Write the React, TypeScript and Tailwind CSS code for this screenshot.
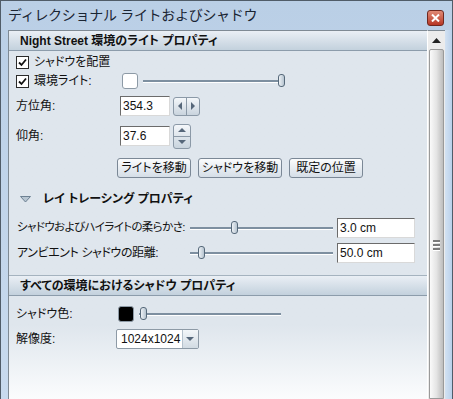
import React from 'react';

const font = "font-['Liberation_Sans','Noto_Sans_CJK_JP',sans-serif] [font-feature-settings:'palt']";

function Check({ checked }: { checked: boolean }) {
  return (
    <span className="w-[13px] h-[13px] bg-white border border-[#2b2b2b] flex items-center justify-center shrink-0">
      {checked && (
        <svg width="9" height="9" viewBox="0 0 9 9">
          <path d="M1 4.5 L3.5 7 L8 1.5" fill="none" stroke="#111" strokeWidth="1.8" />
        </svg>
      )}
    </span>
  );
}

function Slider({ width, thumb }: { width: number; thumb: number }) {
  return (
    <div className="relative h-[14px] shrink-0" style={{ width }}>
      <div className="absolute left-0 right-0 top-[6px] h-[2px] bg-[#7d8fa0] border-b border-white box-content" />
      <div
        className="absolute top-0 w-[7px] h-[13px] rounded-[3px] border border-[#56697a] bg-gradient-to-r from-[#eef2f6] to-[#b6c4d0]"
        style={{ left: thumb }}
      />
    </div>
  );
}

function Field({ value, w }: { value: string; w: string }) {
  return (
    <div
      className={`${w} h-[20px] bg-white border border-t-[#6b6b6b] border-l-[#6b6b6b] border-r-[#d9d9d9] border-b-[#d9d9d9] flex items-center pl-[2px] text-[12px] text-[#111] shrink-0`}
    >
      {value}
    </div>
  );
}

function Tri({ dir }: { dir: 'l' | 'r' | 'u' | 'd' }) {
  const p = {
    l: 'M5 0 L5 8 L1 4 Z',
    r: 'M1 0 L1 8 L5 4 Z',
    u: 'M0 5 L8 5 L4 1 Z',
    d: 'M0 1 L8 1 L4 5 Z',
  }[dir];
  const horiz = dir === 'l' || dir === 'r';
  return (
    <svg width={horiz ? 6 : 9} height={horiz ? 9 : 6} viewBox={horiz ? '0 0 6 9' : '0 0 9 6'}>
      <path d={p} fill="#56677a" />
    </svg>
  );
}

function Button({ label, w }: { label: string; w: string }) {
  return (
    <div
      className={`${w} h-[20px] rounded-[3px] border border-[#7b8896] bg-gradient-to-b from-[#fbfcfd] to-[#d5dee7] flex items-center justify-center text-[12px] text-[#111]`}
    >
      {label}
    </div>
  );
}

function Header({ title }: { title: string }) {
  return (
    <div className="h-[20px] border-b border-[#8c9cab] bg-gradient-to-b from-[#eaeff5] to-[#c3d1dd] flex items-center pl-[11px] text-[12px] font-bold text-[#111]">
      {title}
    </div>
  );
}

export default function App() {
  return (
    <div
      className={`w-[453px] h-[399px] overflow-hidden flex flex-col border-l border-t border-r border-[#505c68] bg-gradient-to-b from-[#bacfe6] to-[#c8daee] text-[#111] ${font}`}
    >
      {/* Title bar */}
      <div className="h-[29px] flex items-center pl-[7px] pr-[8px] shrink-0">
        <span className="flex-1 text-[14px] text-[#1a2533] [font-feature-settings:normal] tracking-[-0.3px]">
          ディレクショナル ライトおよびシャドウ
        </span>
        <div className="w-[17px] h-[16px] mt-[5px] rounded-[3px] border border-[#70281f] bg-gradient-to-b from-[#e08a76] to-[#b73525] flex items-center justify-center">
          <svg width="9" height="8" viewBox="0 0 9 8">
            <path d="M1 0.5 L8 7.5 M8 0.5 L1 7.5" stroke="#fff" strokeWidth="2" />
          </svg>
        </div>
      </div>

      <div className="flex flex-1 min-h-0 pl-[7px]">
        {/* Panel */}
        <div className="flex-1 flex flex-col border-t border-l border-[#7f8a94] bg-gradient-to-b from-[#dfe6ed] via-[#dfe6ed] via-[80%] to-[#fbfcfd]">
          <Header title="Night Street 環境のライト プロパティ" />

          <div className="flex flex-col pl-[7px] text-[12px] whitespace-nowrap">
            <div className="h-[18px] mt-[2px] flex items-center gap-[5px]">
              <Check checked />
              <span>シャドウを配置</span>
            </div>
            <div className="h-[18px] mt-[1px] flex items-center">
              <Check checked />
              <span className="ml-[5px] w-[88px]">環境ライト:</span>
              <div className="w-[16px] h-[16px] rounded-[3px] bg-white border border-[#8d9aa6]" />
              <div className="ml-[5px]">
                <Slider width={140} thumb={135} />
              </div>
            </div>

            <div className="h-[20px] mt-[6px] flex items-center">
              <span className="w-[104px]">方位角:</span>
              <Field value="354.3" w="w-[50px]" />
              <div className="ml-[3px] w-[27px] h-[19px] rounded-[3px] border border-[#8b99a7] bg-gradient-to-b from-[#f4f7fa] to-[#c9d4de] flex">
                <div className="flex-1 flex items-center justify-center border-r border-[#8b99a7]">
                  <Tri dir="l" />
                </div>
                <div className="flex-1 flex items-center justify-center">
                  <Tri dir="r" />
                </div>
              </div>
            </div>

            <div className="h-[24px] mt-[8px] flex items-center">
              <span className="w-[104px]">仰角:</span>
              <Field value="37.6" w="w-[50px]" />
              <div className="ml-[3px] w-[18px] h-[25px] rounded-[3px] border border-[#8b99a7] bg-gradient-to-b from-[#f4f7fa] to-[#c9d4de] flex flex-col">
                <div className="flex-1 flex items-center justify-center border-b border-[#8b99a7]">
                  <Tri dir="u" />
                </div>
                <div className="flex-1 flex items-center justify-center">
                  <Tri dir="d" />
                </div>
              </div>
            </div>

            <div className="h-[20px] mt-[10px] flex items-center pl-[101px] gap-[7px]">
              <Button label="ライトを移動" w="w-[74px]" />
              <Button label="シャドウを移動" w="w-[84px]" />
              <Button label="既定の位置" w="w-[74px]" />
            </div>

            <div className="h-[18px] mt-[12px] flex items-center pl-[4px] font-bold">
              <svg width="11" height="7" viewBox="0 0 11 7">
                <path d="M0.5 0.5 L10.5 0.5 L5.5 6 Z" fill="#b8c6d2" stroke="#6d8193" strokeWidth="1" />
              </svg>
              <span className="ml-[12px]">レイ トレーシング プロパティ</span>
            </div>

            <div className="h-[20px] mt-[10px] flex items-center">
              <span className="w-[174px] pl-[1px] text-[11.5px] tracking-[-0.6px]">シャドウおよびハイライトの柔らかさ:</span>
              <Slider width={143} thumb={41} />
              <div className="ml-[4px]">
                <Field value="3.0 cm" w="w-[78px]" />
              </div>
            </div>
            <div className="h-[20px] mt-[5px] flex items-center">
              <span className="w-[174px] pl-[1px] tracking-[-0.4px]">アンビエント シャドウの距離:</span>
              <Slider width={143} thumb={8} />
              <div className="ml-[4px]">
                <Field value="50.0 cm" w="w-[78px]" />
              </div>
            </div>
          </div>

          <div className="mt-[12px] border-t border-[#a5b3bf]">
            <Header title="すべての環境におけるシャドウ プロパティ" />
          </div>

          <div className="flex flex-col pl-[7px] text-[12px] whitespace-nowrap">
            <div className="h-[18px] mt-[9px] flex items-center">
              <span className="w-[102px]">シャドウ色:</span>
              <div className="w-[16px] h-[16px] rounded-[3px] bg-black border border-[#8d9aa6]" />
              <div className="ml-[5px]">
                <Slider width={142} thumb={1} />
              </div>
            </div>
            <div className="h-[20px] mt-[6px] flex items-center">
              <span className="w-[100px]">解像度:</span>
              <div className="w-[83px] h-[20px] bg-white border border-[#8d9aa6] rounded-[2px] flex">
                <span className="flex-1 flex items-center pl-[4px]">1024x1024</span>
                <div className="w-[16px] border-l border-[#b5c1cc] bg-gradient-to-b from-[#f3f6f9] to-[#d2dbe3] flex items-center justify-center">
                  <Tri dir="d" />
                </div>
              </div>
            </div>
          </div>
        </div>

        {/* Scrollbar */}
        <div className="w-[18px] flex flex-col border-t border-[#7f8a94] bg-[#ececec] border-l border-l-white">
          <div className="h-[18px] flex items-center justify-center shrink-0">
            <svg width="9" height="5" viewBox="0 0 9 5">
              <path d="M0 5 L9 5 L4.5 0 Z" fill="#222" />
            </svg>
          </div>
          <div className="flex-1 mx-[1px] rounded-t-[2px] border border-[#9a9a9a] bg-gradient-to-r from-[#fafafa] via-[#e4e4e4] to-[#bdbdbd] flex flex-col items-center pt-[190px]">
            <div className="flex flex-col gap-[1px]">
              <div className="w-[7px] h-[2px] bg-[#7a7a7a] border-b border-white box-content" />
              <div className="w-[7px] h-[2px] bg-[#7a7a7a] border-b border-white box-content" />
              <div className="w-[7px] h-[2px] bg-[#7a7a7a] border-b border-white box-content" />
            </div>
          </div>
        </div>

        {/* Right frame */}
        <div className="w-[7px] bg-gradient-to-r from-[#d3e2f2] to-[#b9d0ea]" />
      </div>
    </div>
  );
}
